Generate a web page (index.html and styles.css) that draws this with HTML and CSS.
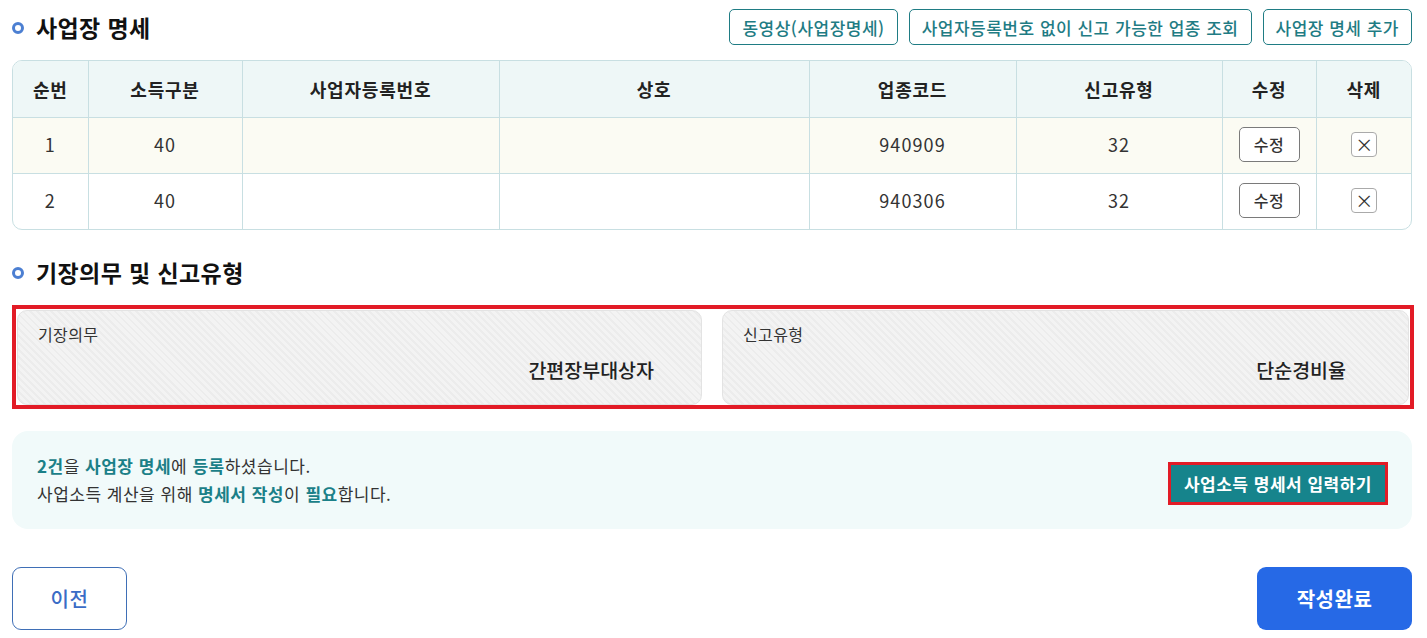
FILE: index.html
```html
<!DOCTYPE html>
<html lang="ko">
<head>
<meta charset="utf-8">
<title>사업장 명세</title>
<link rel="stylesheet" href="styles.css">
</head>
<body>
<div class="page">
  <div class="head-row">
    <h2 class="sec-title"><span class="ring"></span>사업장 명세</h2>
    <div class="head-btns">
      <button class="line-btn">동영상(사업장명세)</button>
      <button class="line-btn">사업자등록번호 없이 신고 가능한 업종 조회</button>
      <button class="line-btn">사업장 명세 추가</button>
    </div>
  </div>

  <div class="table-wrap">
    <table class="grid">
      <colgroup>
        <col class="c1"><col class="c2"><col class="c3"><col class="c4"><col class="c5"><col class="c6"><col class="c7"><col class="c8">
      </colgroup>
      <thead>
        <tr><th>순번</th><th>소득구분</th><th>사업자등록번호</th><th>상호</th><th>업종코드</th><th>신고유형</th><th>수정</th><th>삭제</th></tr>
      </thead>
      <tbody>
        <tr class="hl">
          <td>1</td><td>40</td><td></td><td></td><td>940909</td><td>32</td>
          <td><button class="edit-btn">수정</button></td>
          <td><button class="del-btn">×</button></td>
        </tr>
        <tr>
          <td>2</td><td>40</td><td></td><td></td><td>940306</td><td>32</td>
          <td><button class="edit-btn">수정</button></td>
          <td><button class="del-btn">×</button></td>
        </tr>
      </tbody>
    </table>
  </div>

  <h2 class="sec-title sec2"><span class="ring"></span>기장의무 및 신고유형</h2>

  <div class="red-box">
    <div class="card">
      <div class="card-label">기장의무</div>
      <div class="card-value v1">간편장부대상자</div>
    </div>
    <div class="card">
      <div class="card-label">신고유형</div>
      <div class="card-value v2">단순경비율</div>
    </div>
  </div>

  <div class="info">
    <div class="info-text">
      <p><b>2건</b>을 <b>사업장 명세</b>에 <b>등록</b>하셨습니다.</p>
      <p>사업소득 계산을 위해 <b>명세서 작성</b>이 <b>필요</b>합니다.</p>
    </div>
    <button class="teal-btn">사업소득 명세서 입력하기</button>
  </div>

  <div class="foot">
    <button class="prev-btn">이전</button>
    <button class="done-btn">작성완료</button>
  </div>
</div>
</body>
</html>
```
FILE: styles.css
```css
* { box-sizing: border-box; }
html, body { margin: 0; padding: 0; background: #fff; }
body {
  font-family: "Noto Sans CJK KR", "Noto Sans", sans-serif;
  color: #222;
}
button { font-family: inherit; cursor: pointer; }
.page { width: 1400px; margin-left: 12px; }

.head-row {
  display: flex;
  justify-content: space-between;
  align-items: center;
  margin-top: 9px;
  height: 36px;
}
.sec-title {
  margin: 0;
  display: flex;
  align-items: center;
  font-size: 23px;
  letter-spacing: 0.4px;
  font-weight: 700;
  color: #111;
  line-height: 30px;
}
.ring {
  width: 12px;
  height: 12px;
  border: 3px solid #4c7fd2;
  border-radius: 50%;
  margin-right: 12px;
  margin-top: 1px;
}
.head-btns { display: flex; gap: 11px; }
.line-btn {
  height: 36px;
  padding: 0 12px;
  background: #fff;
  border: 1px solid #1f7c84;
  border-radius: 5px;
  color: #1f7c84;
  font-size: 17px;
  letter-spacing: 0.5px;
  font-weight: 500;
}

.table-wrap {
  margin-top: 15px;
  border: 1px solid #c8dfe2;
  border-radius: 10px;
  overflow: hidden;
}
.grid {
  width: 100%;
  border-collapse: collapse;
  table-layout: fixed;
}
.c1 { width: 75px; } .c2 { width: 154px; } .c3 { width: 257px; } .c4 { width: 310px; }
.c5 { width: 207px; } .c6 { width: 206px; } .c7 { width: 94px; } .c8 { width: auto; }
.grid th, .grid td {
  border-right: 1px solid #c8dfe2;
  border-bottom: 1px solid #c8dfe2;
  text-align: center;
  padding: 0;
}
.grid th:last-child, .grid td:last-child { border-right: none; }
.grid tbody tr:last-child td { border-bottom: none; }
.grid th {
  height: 56px;
  background: #eef7f7;
  font-size: 18px;
  letter-spacing: 0.8px;
  font-weight: 700;
  color: #222;
}
.grid td {
  height: 56px;
  font-size: 18px;
  letter-spacing: 1.1px;
  color: #333;
  padding-bottom: 2px;
}
.grid tr.hl td { background: #fbfbf3; }
.edit-btn {
  width: 61px;
  height: 35px;
  border: 1px solid #7a7a7a;
  border-radius: 5px;
  background: #fff;
  color: #333;
  font-size: 16px;
  letter-spacing: 0.5px;
  font-weight: 500;
  padding: 0;
}
.del-btn {
  width: 26px;
  height: 25px;
  border: 1px solid #aaa;
  border-radius: 4px;
  background: #fff;
  color: #333;
  font-size: 18px;
  line-height: 20px;
  letter-spacing: 0;
  padding: 0;
  margin-left: 1px;
}

.sec2 { margin-top: 27px; }

.red-box {
  margin-top: 18px;
  width: 1402px;
  border: 4px solid #e21b26;
  padding: 1px 1px 0 1px;
  display: grid;
  grid-template-columns: 685px 687px;
  column-gap: 20px;
}
.card {
  height: 95px;
  border: 1px solid #e3e3e3;
  border-radius: 10px;
  background: repeating-linear-gradient(45deg, #f3f3f3 0, #f3f3f3 3px, #ececec 3px, #ececec 5px);
  padding: 13px 20px 0 20px;
}
.card-label {
  font-size: 16px;
  letter-spacing: 0.4px;
  color: #333;
  line-height: 20px;
}
.card-value {
  text-align: right;
  font-size: 19.5px;
  font-weight: 500;
  color: #222;
  margin-top: 12px;
  line-height: 28px;
}
.v1 { padding-right: 27px; }
.v2 { padding-right: 42px; }

.info {
  margin-top: 22px;
  height: 98px;
  background: #f1fafa;
  border-radius: 16px;
  display: flex;
  align-items: center;
  justify-content: space-between;
  padding: 0 24px 0 25px;
}
.info-text p {
  margin: 0;
  font-size: 17px;
  letter-spacing: 0.5px;
  line-height: 28px;
  color: #333;
}
.info-text b { color: #1b8088; font-weight: 700; }
.teal-btn {
  height: 43px;
  padding: 0 13px;
  background: #16848c;
  border: 3px solid #e21b26;
  color: #fff;
  font-size: 17px;
  letter-spacing: 0.5px;
  font-weight: 700;
  margin-top: 7px;
}

.foot {
  margin-top: 38px;
  display: flex;
  justify-content: space-between;
}
.prev-btn {
  width: 115px;
  height: 63px;
  background: #fff;
  border: 1px solid #3f6fb6;
  border-radius: 9px;
  color: #3a6cc6;
  font-size: 20px;
  letter-spacing: 0.5px;
  font-weight: 500;
}
.done-btn {
  width: 155px;
  height: 63px;
  background: #2669e6;
  border: none;
  border-radius: 9px;
  color: #fff;
  font-size: 20px;
  letter-spacing: 0.5px;
  font-weight: 700;
}
```
